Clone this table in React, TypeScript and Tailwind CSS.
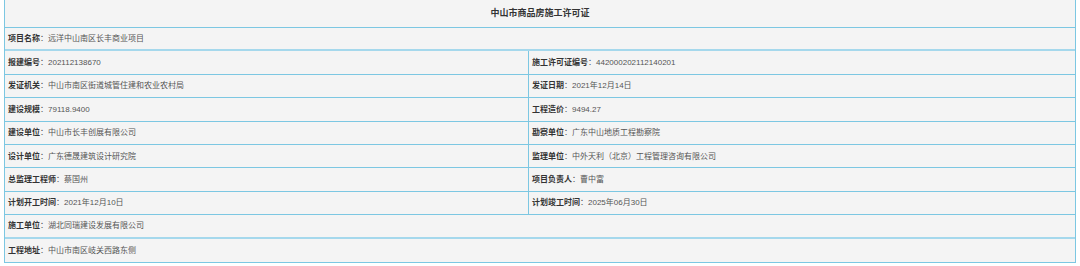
import React from 'react';

type Cell = { label: string; value: string };

const ROWS: { cells: Cell[]; thick?: boolean }[] = [
    { cells: [{ label: '项目名称', value: '远洋中山南区长丰商业项目' }], thick: true },
    { cells: [{ label: '报建编号', value: '202112138670' }, { label: '施工许可证编号', value: '442000202112140201' }] },
    { cells: [{ label: '发证机关', value: '中山市南区街道城管住建和农业农村局' }, { label: '发证日期', value: '2021年12月14日' }] },
    { cells: [{ label: '建设规模', value: '79118.9400' }, { label: '工程造价', value: '9494.27' }] },
    { cells: [{ label: '建设单位', value: '中山市长丰创展有限公司' }, { label: '勘察单位', value: '广东中山地质工程勘察院' }] },
    { cells: [{ label: '设计单位', value: '广东德晟建筑设计研究院' }, { label: '监理单位', value: '中外天利（北京）工程管理咨询有限公司' }] },
    { cells: [{ label: '总监理工程师', value: '蔡国州' }, { label: '项目负责人', value: '曹中富' }] },
    { cells: [{ label: '计划开工时间', value: '2021年12月10日' }, { label: '计划竣工时间', value: '2025年06月30日' }] },
    { cells: [{ label: '施工单位', value: '湖北同瑞建设发展有限公司' }], thick: true },
    { cells: [{ label: '工程地址', value: '中山市南区岐关西路东侧' }] },
];

const CellText: React.FC<{ cell: Cell }> = ({ cell }) => (
    <span className="whitespace-nowrap">
        <b className="font-bold text-[#333]">{cell.label}</b>
        <span className="text-[#555]">：{cell.value}</span>
    </span>
);

export default function App() {
    return (
        <div
            className="w-[1080px] h-[266px] bg-white pl-[4px]"
            style={{ fontFamily: '"Liberation Sans", "Noto Sans CJK SC", sans-serif' }}
        >
            <div className="w-[1072px] bg-[#f4f4f4] border-x border-b border-[#7cc7e2] text-[8px] leading-none">
                <div className="h-[28px] border-b border-[#7cc7e2] flex items-center justify-center">
                    <span className="text-[9px] font-bold text-[#333]">中山市商品房施工许可证</span>
                </div>
                {ROWS.map((row, i) => (
                    <div
                        key={i}
                        className={`h-[23.4px] flex ${row.thick ? 'border-b-2 border-[#a5d8ec]' : i === ROWS.length - 1 ? '' : 'border-b border-[#7cc7e2]'}`}
                    >
                        {row.cells.length === 1 ? (
                            <div className="flex-1 flex items-center pl-[3px] pt-[1px]">
                                <CellText cell={row.cells[0]} />
                            </div>
                        ) : (
                            <>
                                <div className="w-[524px] flex items-center pl-[3px] pt-[1px] border-r border-[#7cc7e2]">
                                    <CellText cell={row.cells[0]} />
                                </div>
                                <div className="flex-1 flex items-center pl-[3px] pt-[1px]">
                                    <CellText cell={row.cells[1]} />
                                </div>
                            </>
                        )}
                    </div>
                ))}
            </div>
        </div>
    );
}
